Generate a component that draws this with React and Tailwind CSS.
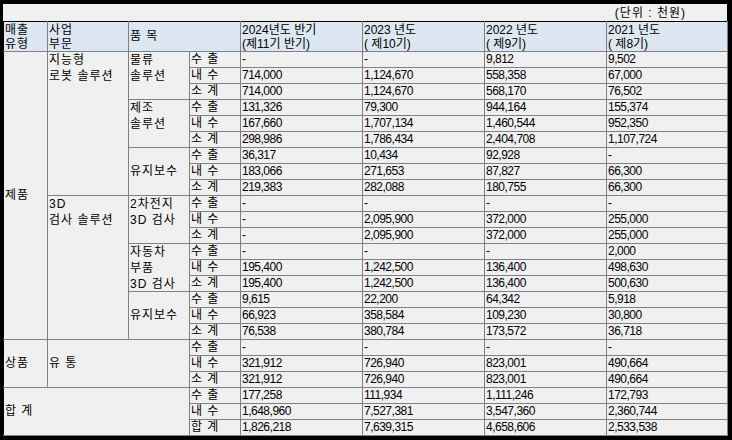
import React from 'react'

const B = 'border border-[#808080] pl-[1px] whitespace-nowrap align-middle'
const N = 'border border-[#808080] pl-[1px] whitespace-nowrap align-middle tracking-[-0.5px]'
const K = 'border border-[#808080] pl-[1px] whitespace-nowrap align-middle tracking-[1px]'
const T = 'border border-[#808080] pl-[1px] whitespace-nowrap align-top tracking-[1px]'
const H = 'border border-[#808080] border-t-black bg-[#dde7f1] pl-[1px] pt-[1px] whitespace-nowrap align-top leading-[14px] text-left font-normal'

const labels = ['수 출', '내 수', '소 계']

// values per block: 3 rows x 4 periods
const blocks = [
  [['-', '-', '9,812', '9,502'], ['714,000', '1,124,670', '558,358', '67,000'], ['714,000', '1,124,670', '568,170', '76,502']],
  [['131,326', '79,300', '944,164', '155,374'], ['167,660', '1,707,134', '1,460,544', '952,350'], ['298,986', '1,786,434', '2,404,708', '1,107,724']],
  [['36,317', '10,434', '92,928', '-'], ['183,066', '271,653', '87,827', '66,300'], ['219,383', '282,088', '180,755', '66,300']],
  [['-', '-', '-', '-'], ['-', '2,095,900', '372,000', '255,000'], ['-', '2,095,900', '372,000', '255,000']],
  [['-', '-', '-', '2,000'], ['195,400', '1,242,500', '136,400', '498,630'], ['195,400', '1,242,500', '136,400', '500,630']],
  [['9,615', '22,200', '64,342', '5,918'], ['66,923', '358,584', '109,230', '30,800'], ['76,538', '380,784', '173,572', '36,718']],
  [['-', '-', '-', '-'], ['321,912', '726,940', '823,001', '490,664'], ['321,912', '726,940', '823,001', '490,664']],
  [['177,258', '111,934', '1,111,246', '172,793'], ['1,648,960', '7,527,381', '3,547,360', '2,360,744'], ['1,826,218', '7,639,315', '4,658,606', '2,533,538']],
]

const Lines = ({ items, lh = 'leading-[16px]' }) => (
  <div className={lh + ' -mb-[2px]'}>
    {items.map((t, i) => <div key={i}>{t}</div>)}
  </div>
)

// leading cells, only on the first row of each block
const heads = [
  <>
    <td rowSpan={18} className={K + ' border-l-black'}>제품</td>
    <td rowSpan={9} className={T}><Lines items={['지능형', '로봇 솔루션']} /></td>
    <td rowSpan={3} className={T}><Lines items={['물류', '솔루션']} /></td>
  </>,
  <td rowSpan={3} className={T}><Lines items={['제조', '솔루션']} /></td>,
  <td rowSpan={3} className={K}>유지보수</td>,
  <>
    <td rowSpan={9} className={T}><Lines items={['3D', '검사 솔루션']} /></td>
    <td rowSpan={3} className={T}><Lines items={['2차전지', '3D 검사']} /></td>
  </>,
  <td rowSpan={3} className={T}><Lines items={['자동차', '부품', '3D 검사']} /></td>,
  <td rowSpan={3} className={K}>유지보수</td>,
  <>
    <td rowSpan={3} className={K + ' border-l-black'}>상품</td>
    <td rowSpan={3} colSpan={2} className={K}>유 통</td>
  </>,
  <td rowSpan={3} colSpan={3} className={K + ' border-l-black'}>합 계</td>,
]

export default function App() {
  return (
    <div className="w-[732px] h-[440px] bg-black pt-[4px] pl-[3px] overflow-hidden">
      <div className="w-[724px] h-[432px] bg-[#f0f0f0] text-black text-[12px] font-['Liberation_Sans','Noto_Sans_CJK_KR',sans-serif]">
        <div className="h-[17px] pt-[2px] pr-[41px] leading-[15px] text-right tracking-[1px]">(단위 : 천원)</div>
        <table className="w-[724px] table-fixed border-collapse leading-[15px]">
          <colgroup>
            <col className="w-[44px]" />
            <col className="w-[81px]" />
            <col className="w-[61px]" />
            <col className="w-[51px]" />
            <col className="w-[122px]" />
            <col className="w-[122px]" />
            <col className="w-[122px]" />
            <col className="w-[121px]" />
          </colgroup>
          <thead>
            <tr className="h-[30px]">
              <th className={H + ' border-l-black tracking-[1px]'}><div>매출</div><div>유형</div></th>
              <th className={H + ' tracking-[1px]'}><div>사업</div><div>부문</div></th>
              <th colSpan={2} className="border border-[#808080] border-t-black bg-[#dde7f1] pl-[1px] align-middle text-left font-normal tracking-[1px]">품 목</th>
              <th className={H}><div>2024년도 반기</div><div>(제11기 반기)</div></th>
              <th className={H}><div>2023 년도</div><div>( 제10기)</div></th>
              <th className={H}><div>2022 년도</div><div>( 제9기)</div></th>
              <th className={H}><div>2021 년도</div><div>( 제8기)</div></th>
            </tr>
          </thead>
          <tbody>
            {blocks.map((block, bi) =>
              block.map((vals, ri) => (
                <tr key={bi + '-' + ri} className="h-[16px]">
                  {ri === 0 && heads[bi]}
                  <td className={K}>{bi === 7 && ri === 2 ? '합 계' : labels[ri]}</td>
                  {vals.map((v, i) => <td key={i} className={N}>{v}</td>)}
                </tr>
              ))
            )}
          </tbody>
        </table>
      </div>
    </div>
  )
}
